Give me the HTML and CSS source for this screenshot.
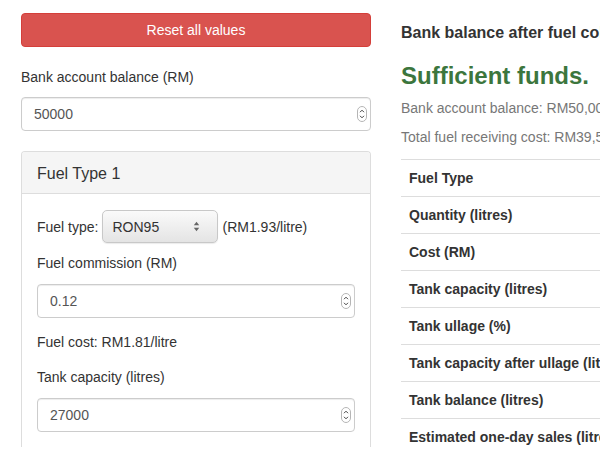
FILE: index.html
```html
<!DOCTYPE html>
<html>
<head>
<meta charset="utf-8">
<title>Fuel calculator</title>
<link rel="stylesheet" href="styles.css">
</head>
<body>
<div class="container">
  <div class="col">
    <button class="btn-reset">Reset all values</button>
    <div class="form-group top-group">
      <label class="label">Bank account balance (RM)</label>
      <div class="num-input">
        <input type="text" value="50000">
        <span class="spin"><svg width="10" height="16" viewBox="0 0 10 16"><rect x="0.5" y="0.5" width="9" height="15" rx="4.5" fill="#fff" stroke="#b5b5b5"/><path d="M3 6.2 L5 4.2 L7 6.2" fill="none" stroke="#444" stroke-width="1"/><path d="M3 9.8 L5 11.8 L7 9.8" fill="none" stroke="#444" stroke-width="1"/></svg></span>
      </div>
    </div>
    <div class="panel">
      <div class="panel-heading">Fuel Type 1</div>
      <div class="panel-body">
        <div class="fuel-row">
          <span>Fuel type:</span>
          <div class="select">
            <span>RON95</span>
            <svg width="7" height="11" viewBox="0 0 7 11"><path d="M0.8 4.2 L3.5 0.8 L6.2 4.2 Z" fill="#666"/><path d="M0.8 6.8 L3.5 10.2 L6.2 6.8 Z" fill="#666"/></svg>
          </div>
          <span>(RM1.93/litre)</span>
        </div>
        <label class="label">Fuel commission (RM)</label>
        <div class="num-input">
          <input type="text" value="0.12">
          <span class="spin"><svg width="10" height="16" viewBox="0 0 10 16"><rect x="0.5" y="0.5" width="9" height="15" rx="4.5" fill="#fff" stroke="#b5b5b5"/><path d="M3 6.2 L5 4.2 L7 6.2" fill="none" stroke="#444" stroke-width="1"/><path d="M3 9.8 L5 11.8 L7 9.8" fill="none" stroke="#444" stroke-width="1"/></svg></span>
        </div>
        <p class="cost">Fuel cost: RM1.81/litre</p>
        <label class="label">Tank capacity (litres)</label>
        <div class="num-input">
          <input type="text" value="27000">
          <span class="spin"><svg width="10" height="16" viewBox="0 0 10 16"><rect x="0.5" y="0.5" width="9" height="15" rx="4.5" fill="#fff" stroke="#b5b5b5"/><path d="M3 6.2 L5 4.2 L7 6.2" fill="none" stroke="#444" stroke-width="1"/><path d="M3 9.8 L5 11.8 L7 9.8" fill="none" stroke="#444" stroke-width="1"/></svg></span>
        </div>
      </div>
    </div>
  </div>
  <div class="col">
    <h4 class="title">Bank balance after fuel collection</h4>
    <h2 class="ok">Sufficient funds.</h2>
    <p class="muted">Bank account balance: RM50,000.00</p>
    <p class="muted">Total fuel receiving cost: RM39,528.00</p>
    <table class="table">
      <tr><th>Fuel Type</th></tr>
      <tr><th>Quantity (litres)</th></tr>
      <tr><th>Cost (RM)</th></tr>
      <tr><th>Tank capacity (litres)</th></tr>
      <tr><th>Tank ullage (%)</th></tr>
      <tr><th>Tank capacity after ullage (litres)</th></tr>
      <tr><th>Tank balance (litres)</th></tr>
      <tr><th>Estimated one-day sales (litres)</th></tr>
    </table>
  </div>
</div>
</body>
</html>
```
FILE: styles.css
```css
html, body {
  margin: 0;
  padding: 0;
  overflow: hidden;
  background: #fff;
}
body {
  font-family: "Liberation Sans", Arial, sans-serif;
  font-size: 14px;
  line-height: 20px;
  color: #333;
}
.container {
  display: flex;
  width: 760px;
  padding-left: 6px;
  padding-top: 13px;
}
.col {
  width: 350px;
  padding: 0 15px;
  flex: none;
}
.btn-reset {
  display: block;
  width: 100%;
  height: 34px;
  margin: 0;
  padding: 6px 12px;
  font-family: inherit;
  font-size: 14px;
  line-height: 20px;
  color: #fff;
  background: #d9534f;
  border: 1px solid #d43f3a;
  border-radius: 4px;
}
.top-group {
  margin-top: 20px;
  margin-bottom: 20px;
}
.label {
  display: block;
  margin-bottom: 10px;
}
.panel-body .label {
  margin-bottom: 11px;
}
.num-input {
  display: flex;
  align-items: center;
  height: 32px;
  border: 1px solid #ccc;
  border-radius: 4px;
  box-shadow: inset 0 1px 1px rgba(0,0,0,.075);
  padding: 0 3px 0 12px;
  background: #fff;
}
.num-input input {
  flex: 1;
  min-width: 0;
  border: 0;
  outline: none;
  padding: 0;
  font-family: inherit;
  font-size: 14px;
  color: #555;
  background: transparent;
}
.spin {
  display: flex;
  align-items: center;
}
.panel {
  border: 1px solid #ddd;
  border-radius: 4px 4px 0 0;
  border-bottom: 0;
}
.panel-heading {
  background: #f5f5f5;
  border-bottom: 1px solid #ddd;
  padding: 12px 15px 9px;
  font-size: 16px;
  line-height: 20px;
  border-radius: 3px 3px 0 0;
}
.panel-body {
  padding: 16px 15px 15px;
}
.fuel-row {
  display: flex;
  align-items: center;
  gap: 4px;
  margin-bottom: 10px;
}
.select {
  display: flex;
  align-items: center;
  justify-content: space-between;
  width: 116px;
  height: 33px;
  padding: 0 17px 0 9px;
  box-sizing: border-box;
  border: 1px solid #c8c8c8;
  border-radius: 5px;
  background: linear-gradient(#fafafa, #e4e4e4);
  box-shadow: 0 1px 1px rgba(0,0,0,.08);
  color: #333;
}
.cost {
  margin: 14px 0 15px;
}
.title {
  margin: 10px 0 0;
  font-size: 16px;
  line-height: 20px;
  font-weight: bold;
  white-space: nowrap;
}
.ok {
  margin: 20px 0 0;
  font-size: 24px;
  line-height: 26px;
  font-weight: bold;
  color: #3c763d;
}
.muted {
  margin: 9px 0 0;
  font-size: 14px;
  color: #777;
  white-space: nowrap;
}
.muted + .muted {
  margin-top: 9px;
}
.table {
  width: 100%;
  border-collapse: collapse;
  margin-top: 12px;
}
.table th {
  text-align: left;
  padding: 8px;
  border-top: 1px solid #ddd;
  white-space: nowrap;
  line-height: 20px;
}
```
